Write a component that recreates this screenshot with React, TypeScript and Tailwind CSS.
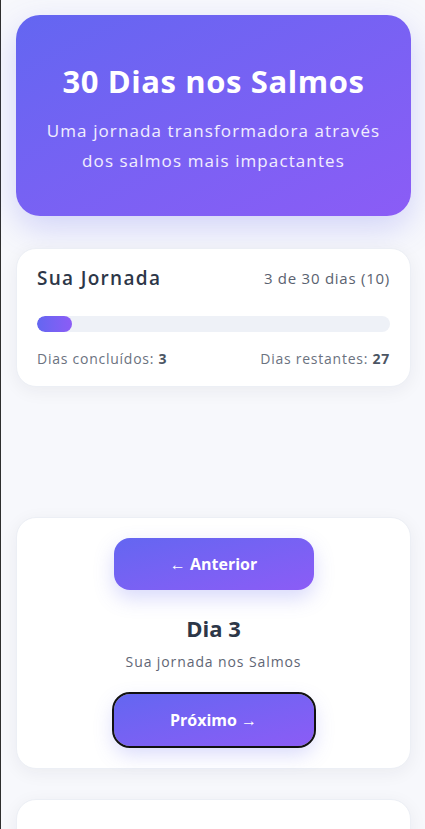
const App = () => {
  return (
    <div
      className="min-h-[829px] border-l border-[#2f2f2f] bg-[#f7f8fc] pl-[15px] pr-[14px] pt-[15px] pb-10 text-[#2d3748]"
      style={{ fontFamily: '"Open Sans", "Noto Sans", sans-serif' }}
    >
      <header className="rounded-[24px] bg-gradient-to-br from-[#6366f1] to-[#8b5cf6] px-6 pt-[46px] pb-[40px] text-center text-white shadow-[0_12px_32px_rgba(99,102,241,0.25)]">
        <h1 className="text-[31px] font-bold leading-[40px] tracking-[0.6px]">
          30 Dias nos Salmos
        </h1>
        <p className="mt-[15px] text-[17px] leading-[30px] tracking-[1.1px] text-white/90">
          Uma jornada transformadora através dos salmos mais impactantes
        </p>
      </header>

      <section className="mt-8 rounded-[20px] border border-[#eceff5] bg-white px-5 pt-[19px] pb-[17px] shadow-[0_4px_18px_rgba(30,41,59,0.06)]">
        <div className="flex items-center justify-between">
          <h2 className="text-[19px] font-semibold leading-5 tracking-[1.3px] text-[#2d3748]">
            Sua Jornada
          </h2>
          <span className="text-[15px] leading-5 tracking-[0.75px] text-[#5a6270]">
            3 de 30 dias (10)
          </span>
        </div>
        <div className="mt-7 h-4 w-full overflow-hidden rounded-full bg-[#eef1f7]">
          <div
            className="h-full rounded-full bg-gradient-to-r from-[#6366f1] to-[#8b5cf6]"
            style={{ width: "10%" }}
          />
        </div>
        <div className="mt-[17px] flex justify-between text-[14px] leading-5 tracking-[0.75px] text-[#6b7280]">
          <span>
            Dias concluídos: <strong className="font-bold text-[#4b5563]">3</strong>
          </span>
          <span>
            Dias restantes: <strong className="font-bold text-[#4b5563]">27</strong>
          </span>
        </div>
      </section>

      <section className="mt-[130px] flex flex-col items-center rounded-[20px] border border-[#eceff5] bg-white pt-5 pb-[22px] shadow-[0_4px_18px_rgba(30,41,59,0.06)]">
        <button
          type="button"
          className="h-[52px] w-[200px] rounded-[16px] bg-gradient-to-br from-[#6366f1] to-[#8b5cf6] text-base font-bold text-white shadow-[0_8px_20px_rgba(99,102,241,0.25)]"
        >
          ← Anterior
        </button>
        <h3 className="mt-[22px] text-[22px] font-bold leading-8 text-[#2d3748]">Dia 3</h3>
        <p className="mt-2 text-[14px] leading-5 tracking-[0.9px] text-[#5f6675]">
          Sua jornada nos Salmos
        </p>
        <button
          type="button"
          className="mt-[22px] h-[52px] w-[200px] rounded-[16px] bg-gradient-to-br from-[#6366f1] to-[#8b5cf6] text-base font-bold text-white shadow-[0_8px_20px_rgba(99,102,241,0.25)] outline-2 outline-[#111]"
        >
          Próximo →
        </button>
      </section>

      <section className="mt-[30px] h-[220px] rounded-[20px] border border-[#eceff5] bg-white shadow-[0_4px_18px_rgba(30,41,59,0.06)]" />
    </div>
  );
};

export default App;
